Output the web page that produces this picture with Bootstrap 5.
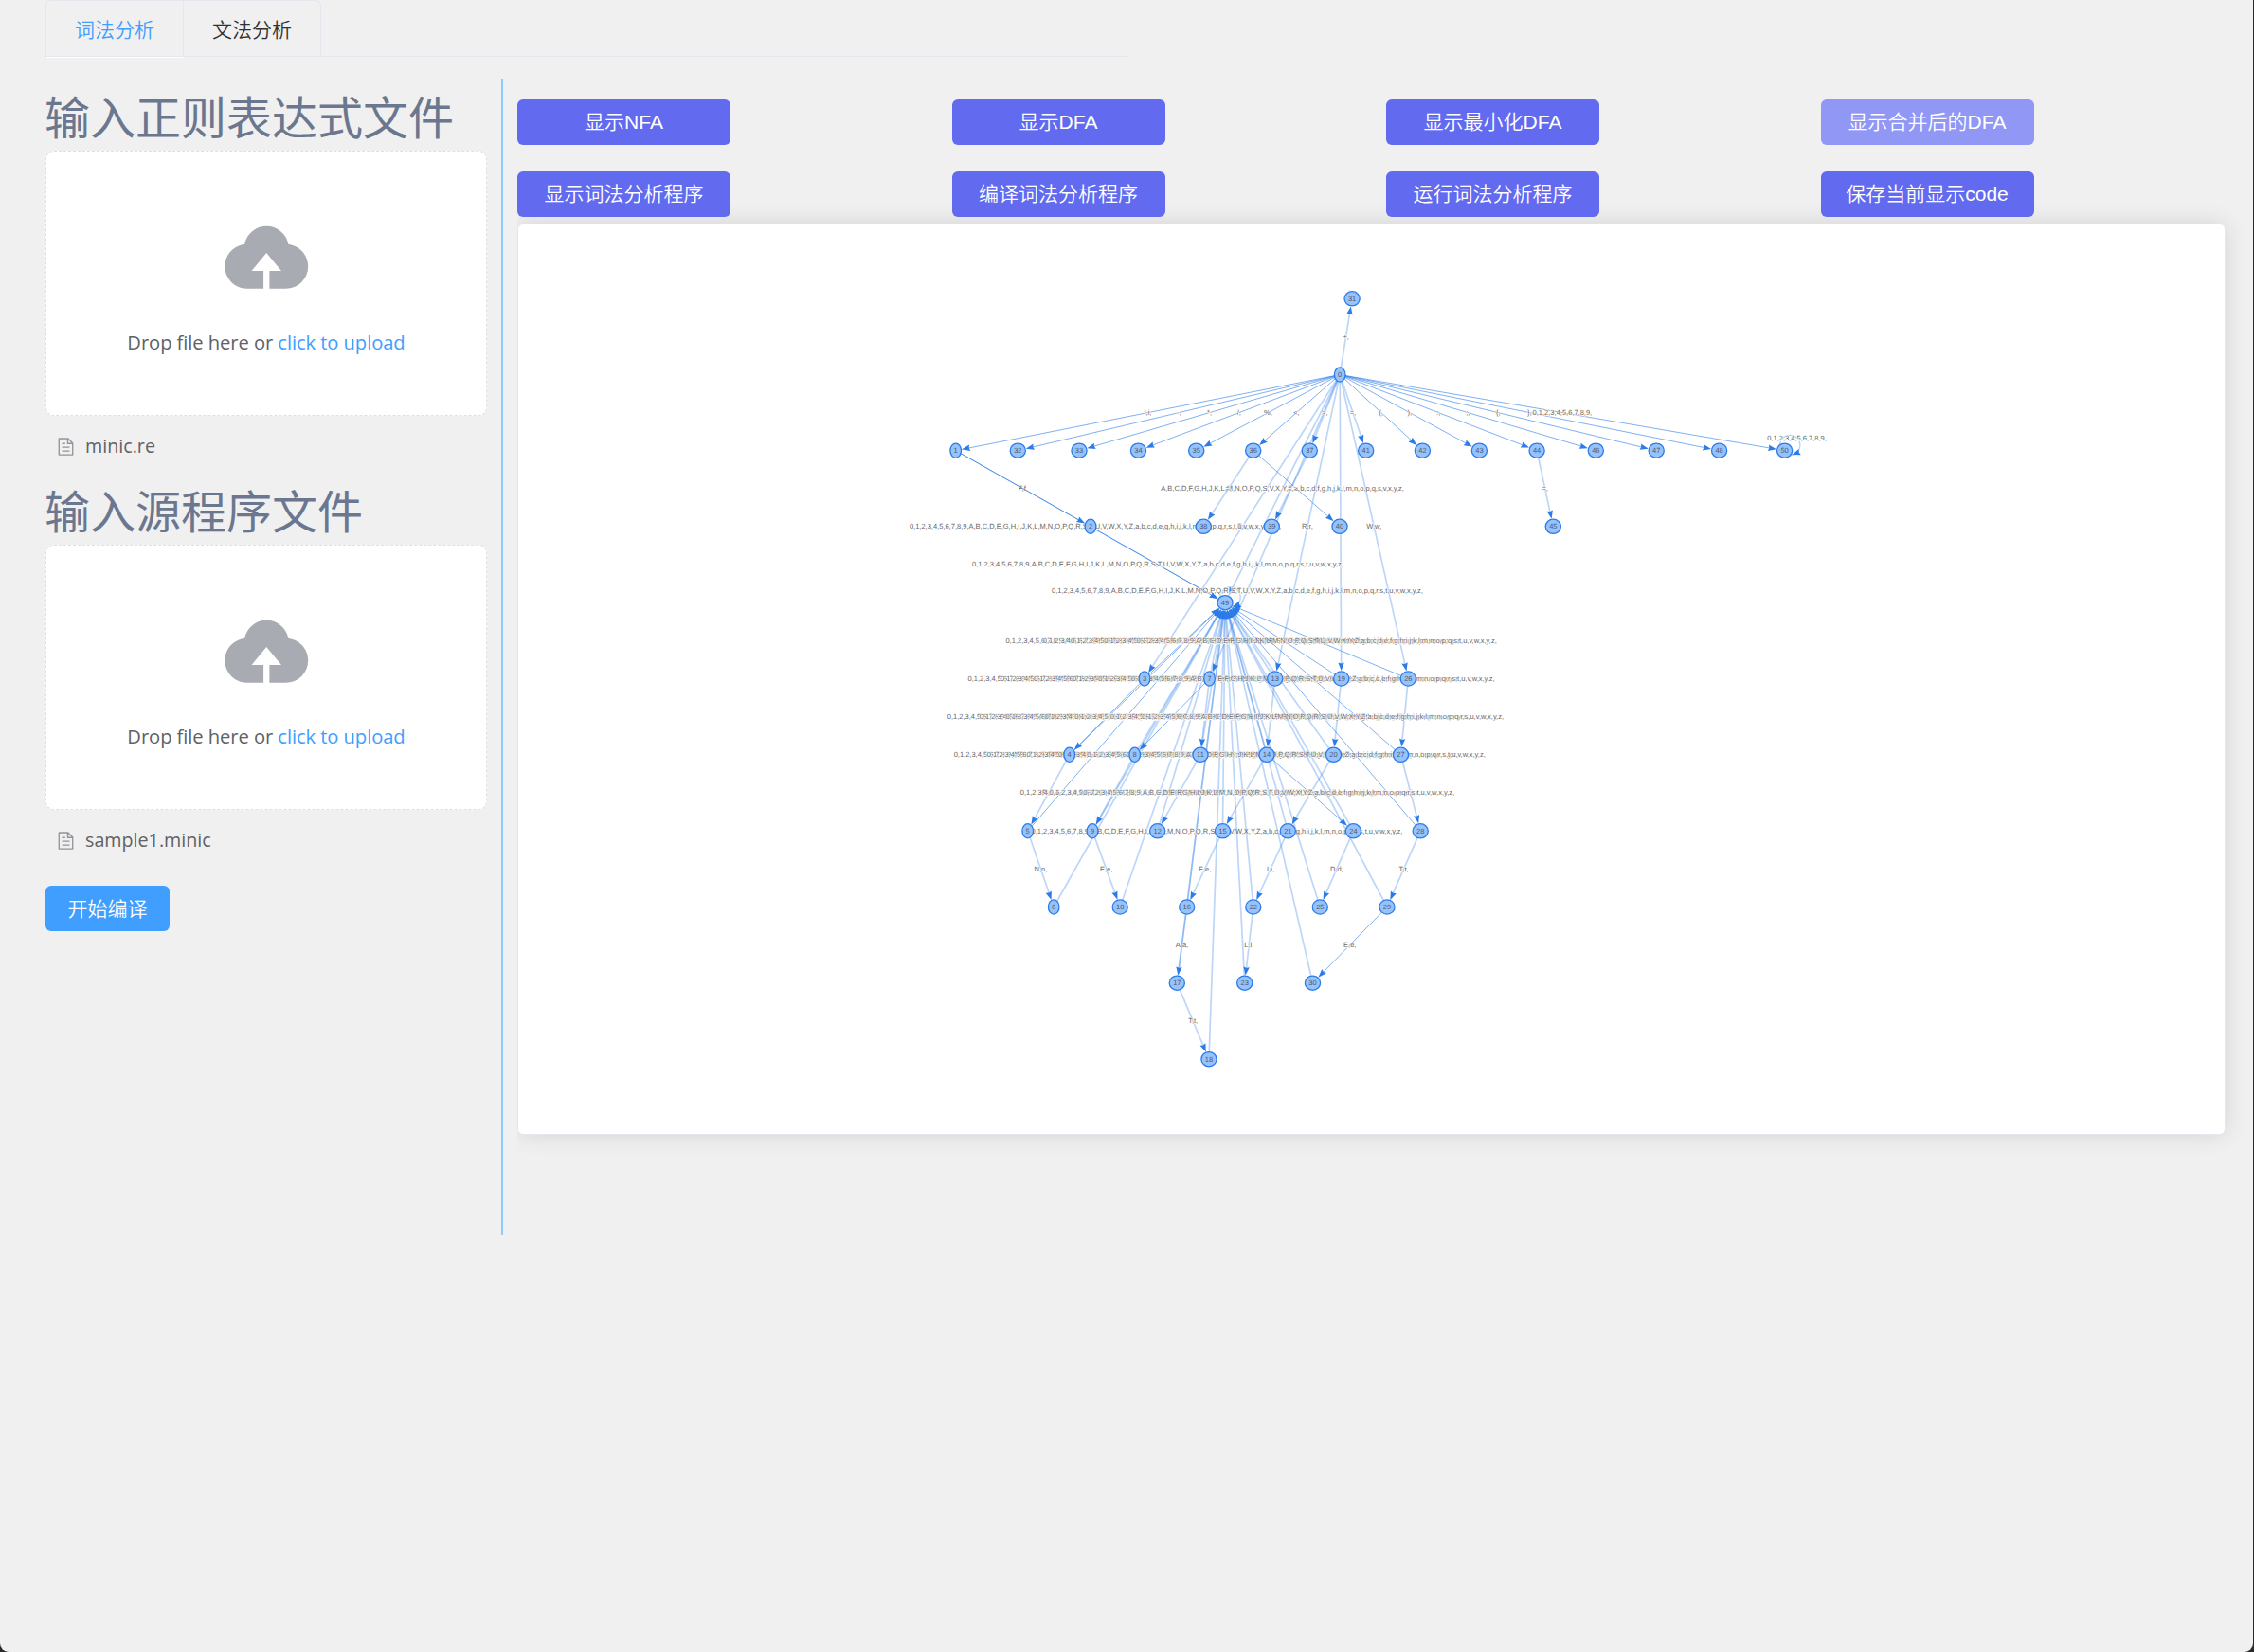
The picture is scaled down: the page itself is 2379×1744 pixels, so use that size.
<!DOCTYPE html>
<html lang="zh-CN">
<head>
<meta charset="utf-8">
<title>词法分析</title>
<link href="https://cdn.jsdelivr.net/npm/bootstrap@5.3.0/dist/css/bootstrap.min.css" rel="stylesheet">
<style>
html { background: #2b2b2b; }
body { background: #2b2b2b; font-family: "Open Sans", "Noto Sans CJK SC", sans-serif; font-size: 21px; color: #303133; }
.app-shell { height: 1744px; width: 2378px; background: #f0f0f0; border-radius: 0 0 9px 9px; overflow: hidden; }
.tab-strip { margin-left: 48px; width: 1141px; height: 60px; border-bottom: 1px solid #e4e7ed; margin-bottom: 23px; }
.tab-set { height: 61px; border: 1px solid #e4e7ed; border-bottom: 0; border-radius: 6px 6px 0 0; }
.tab-set .nav-link { width: 144px; height: 60px; padding: 0; line-height: 59px; text-align: center; color: #303133; font-family: "Noto Sans CJK SC", sans-serif; font-weight: 350; }
.tab-set .nav-link.active { color: #409eff; width: 145px; border-right: 1px solid #e4e7ed; border-bottom: 1px solid #fff; }
.side { width: 529px; padding-left: 48px; padding-right: 15px; }
.side-title { font: 400 48px/76px "Noto Sans CJK SC", sans-serif; color: #6b778f; margin: 0 0 0 -1px; height: 76px; white-space: nowrap; }
.side-title.compact { height: 68px; line-height: 60px; }
.drop-zone { height: 280px; border: 1px dashed #dcdfe6; border-radius: 9px; background: #fff; padding-top: 60px; }
.cloud { width: 100.5px; height: 100.5px; fill: #a8abb2; display: block; }
.drop-text { line-height: 32px; margin-top: 24px; color: #606266; white-space: nowrap; font-size: 20.2px; letter-spacing: -.08px; }
.drop-text span { color: #409eff; }
.file-row { height: 68px; padding: 0 0 4px 11px; gap: 10px; color: #606266; font-size: 19.7px; }
.file-row svg { width: 21px; height: 21px; fill: #909399; }
.btn-run { width: 131px; height: 48px; margin-top: 12px; background: #409eff; color: #fff; border: 0; padding: 0 0 2px; border-radius: 6px; font: 350 21px/46px "Noto Sans CJK SC", sans-serif; }
.splitter { width: 2px; height: 1221px; background: #8ccbff; }
.board { padding-left: 15px; padding-top: 22px; margin-right: -2px; }
.tool-row { height: 48px; margin-bottom: 28px; position: relative; z-index: 1; }
.btn-tool { width: 225px; height: 48px; background: #626aef; color: #fff; border: 0; padding: 0 0 4px; border-radius: 6px; font: 21px/44px "Liberation Sans", "Noto Sans CJK SC", sans-serif; }
.btn-tool.dim { background: #9197f5; }
.tool-row b { font-weight: 350; font-family: "Noto Sans CJK SC", sans-serif; }
.graph-card { width: 1803px; height: 962px; margin-top: 7px; background: #fff; border: 1px solid #e4e7ed; border-radius: 6px; box-shadow: 0 0 24px rgba(0,0,0,.12); clip-path: inset(-40px -40px -40px 0); }
.graph-card svg { display: block; }
.graph-card text { font: 7.5px "Liberation Sans", sans-serif; text-anchor: middle; text-rendering: geometricPrecision; }
.edge-text { fill: #666; stroke: #fff; stroke-width: 1.1px; paint-order: stroke; }
.node-text { fill: #4a5a70; }
.node-shape { fill: #97c2fc; stroke: #2b7ce9; stroke-width: 1.3; }
.edge-line { stroke: #2b7ce9; fill: none; }
.edge-tip { fill: #2b7ce9; }
</style>
</head>
<body>
<div class="app-shell">
  <div class="tab-strip d-flex">
    <nav class="tab-set nav flex-nowrap">
      <a class="nav-link active">词法分析</a>
      <a class="nav-link">文法分析</a>
    </nav>
  </div>
  <div class="d-flex">
    <aside class="side flex-shrink-0">
      <h1 class="side-title">输入正则表达式文件</h1>
      <div class="drop-zone d-flex flex-column align-items-center">
        <svg class="cloud" viewBox="0 0 1024 1024"><path d="M544 864V672h128L512 480 352 672h128v192H320v-1.600c-5.376.320-10.496 1.600-16 1.600A240 240 0 0 1 64 624c0-123.136 93.120-223.488 212.608-237.248A239.808 239.808 0 0 1 512 192a239.872 239.872 0 0 1 235.456 194.752c119.488 13.760 212.480 114.112 212.480 237.248a240 240 0 0 1-240 240c-5.376 0-10.560-1.280-16-1.600v1.600H544z"/></svg>
        <div class="drop-text">Drop file here or <span>click to upload</span></div>
      </div>
      <div class="file-row d-flex align-items-center">
        <svg viewBox="0 0 1024 1024"><path d="M832 384H576V128H192v768h640V384zm-26.496-64L640 154.496V320h165.504zM160 64h480l256 256v608a32 32 0 0 1-32 32H160a32 32 0 0 1-32-32V96a32 32 0 0 1 32-32zm160 448h384v64H320v-64zm0-192h160v64H320v-64zm0 384h384v64H320v-64z"/></svg>
        <span>minic.re</span>
      </div>
      <h1 class="side-title compact">输入源程序文件</h1>
      <div class="drop-zone d-flex flex-column align-items-center">
        <svg class="cloud" viewBox="0 0 1024 1024"><path d="M544 864V672h128L512 480 352 672h128v192H320v-1.600c-5.376.320-10.496 1.600-16 1.600A240 240 0 0 1 64 624c0-123.136 93.120-223.488 212.608-237.248A239.808 239.808 0 0 1 512 192a239.872 239.872 0 0 1 235.456 194.752c119.488 13.760 212.480 114.112 212.480 237.248a240 240 0 0 1-240 240c-5.376 0-10.560-1.280-16-1.600v1.600H544z"/></svg>
        <div class="drop-text">Drop file here or <span>click to upload</span></div>
      </div>
      <div class="file-row d-flex align-items-center">
        <svg viewBox="0 0 1024 1024"><path d="M832 384H576V128H192v768h640V384zm-26.496-64L640 154.496V320h165.504zM160 64h480l256 256v608a32 32 0 0 1-32 32H160a32 32 0 0 1-32-32V96a32 32 0 0 1 32-32zm160 448h384v64H320v-64zm0-192h160v64H320v-64zm0 384h384v64H320v-64z"/></svg>
        <span>sample1.minic</span>
      </div>
      <button class="btn btn-run d-block">开始编译</button>
    </aside>
    <div class="splitter flex-shrink-0"></div>
    <main class="board flex-grow-1">
      <div class="tool-row row g-0">
        <div class="col-3"><button class="btn btn-tool"><b>显示</b>NFA</button></div>
        <div class="col-3"><button class="btn btn-tool"><b>显示</b>DFA</button></div>
        <div class="col-3"><button class="btn btn-tool"><b>显示最小化</b>DFA</button></div>
        <div class="col-3"><button class="btn btn-tool dim"><b>显示合并后的</b>DFA</button></div>
      </div>
      <div class="tool-row row g-0 mb-0">
        <div class="col-3"><button class="btn btn-tool"><b>显示词法分析程序</b></button></div>
        <div class="col-3"><button class="btn btn-tool"><b>编译词法分析程序</b></button></div>
        <div class="col-3"><button class="btn btn-tool"><b>运行词法分析程序</b></button></div>
        <div class="col-3"><button class="btn btn-tool"><b>保存当前显示</b>code</button></div>
      </div>
      <div class="graph-card">
        <svg id="dfa" width="1801" height="960" viewBox="547 237 1801 960"></svg>
      </div>
    </main>
  </div>
</div>
<script src="https://cdn.jsdelivr.net/npm/bootstrap@5.3.0/dist/js/bootstrap.bundle.min.js"></script>
<script>
// Levels of the automaton: y, then state number -> x
const levels = [
  [315.3, {31:1427.1}],
  [395.5, {0:1414.2}],
  [475.7, {1:1008.7,32:1074.3,33:1139,34:1201.5,35:1262.7,36:1322.7,37:1382.3,41:1441.7,42:1501.4,43:1561.4,44:1622.1,46:1684.3,47:1748.2,48:1814.6,50:1883.6}],
  [555.8, {2:1151,38:1270.3,39:1342.3,40:1414,45:1639.3}],
  [636.2, {49:1293}],
  [716.5, {3:1208,7:1276.5,13:1345.7,19:1415.7,26:1486.3}],
  [796.8, {4:1128.7,8:1197.7,11:1267,14:1337,20:1407.5,27:1478.5}],
  [877.3, {5:1084.7,9:1153,12:1221.7,15:1290.5,21:1359.3,24:1428.4,28:1499.2}],
  [957.5, {6:1112.2,10:1182.2,16:1252.7,22:1322.8,25:1393.3,29:1464}],
  [1037.7, {17:1242.3,23:1313.7,30:1385.5}],
  [1118.2, {18:1276}]
];
const P = {};
levels.forEach(([y, m]) => Object.keys(m).forEach(k => P[k] = [m[k], y]));
const DIG = '0,1,2,3,4,5,6,7,8,9,', UP = 'ABCDEFGHIJKLMNOPQRSTUVWXYZ';
const pair = c => c + ',' + c.toLowerCase() + ',';
const rest = (skip, digits = true) => {
  const u = [...UP].filter(c => !skip.includes(c)).join(',') + ',';
  return (digits ? DIG : '') + u + u.toLowerCase();
};
const E = [];
[[1,'I'],[3,'T'],[7,'E'],[13,'R'],[19,'U'],[26,'W']].forEach(([t,c]) => E.push([0,t,pair(c)]));
[[31,'+'],[32,'-'],[33,'*'],[34,'/'],[35,'%'],[36,'<'],[37,'>'],[41,'='],[42,'('],[43,')'],[44,':'],[46,';'],[47,'{'],[48,'}']].forEach(([t,c]) => E.push([0,t,c+',']));
E.push([0,49,rest('EIRTUW',false)],[0,50,DIG],[36,38,'=,'],[36,40,'>,'],[37,39,'=,'],[44,45,'=,']);
[[1,2,'F'],[3,4,'H'],[4,5,'E'],[5,6,'N'],[7,8,'L'],[8,9,'S'],[9,10,'E'],[7,11,'N'],[11,12,'D'],[13,14,'E'],[14,15,'P'],[15,16,'E'],[16,17,'A'],[17,18,'T'],[19,20,'N'],[20,21,'T'],[21,22,'I'],[22,23,'L'],[14,24,'A'],[24,25,'D'],[26,27,'R'],[27,28,'I'],[28,29,'T'],[29,30,'E']].forEach(([a,b,c]) => E.push([a,b,pair(c)]));
const skips = {};
E.forEach(([a,,c]) => { if (/^[A-Z],[a-z],$/.test(c) && a) skips[a] = (skips[a] || '') + c[0]; });
for (let i = 1; i <= 30; i++) E.push([i,49,rest(skips[i] || '')]);

const esc = s => s.replace(/</g,'&lt;').replace(/>/g,'&gt;');
const rx = k => (+k < 10 ? 5.8 : 8.1), ry = 7.6;
const tip = (x, y, a) => {
  const p = (d, w) => (x - d*Math.cos(a) - w*Math.sin(a)).toFixed(1) + ',' + (y - d*Math.sin(a) + w*Math.cos(a)).toFixed(1);
  return `<polygon class="edge-tip" points="${p(0,0)} ${p(8.8,3.2)} ${p(7.8,0)} ${p(8.8,-3.2)}"/>`;
};
let out = '';
E.forEach(([f, t, label]) => {
  const [x1, y1] = P[f], [x2, y2] = P[t], a = Math.atan2(y2-y1, x2-x1);
  const r = 1 / Math.hypot(Math.cos(a)/rx(t), Math.sin(a)/ry) + .6;
  const ex = x2 - r*Math.cos(a), ey = y2 - r*Math.sin(a);
  const steep = Math.abs(y2-y1) > Math.abs(x2-x1)*1.2;
  out += `<line class="edge-line" x1="${x1}" y1="${y1}" x2="${(ex-6*Math.cos(a)).toFixed(1)}" y2="${(ey-6*Math.sin(a)).toFixed(1)}" stroke-width="${steep?1.7:1}" stroke-opacity="${steep?.31:.6}"/>` + tip(ex, ey, a);
  out += `<text class="edge-text" x="${(x1+x2)/2}" y="${(y1+y2)/2+2.4}">${esc(label)}</text>`;
});
[[50,DIG],[49,rest('')]].forEach(([k, label]) => {
  const [x, y] = P[k];
  out += `<circle class="edge-line" cx="${x+5.6}" cy="${y-5.6}" r="10.7" stroke-width="1.3" stroke-opacity=".32"/>` + tip(x+7.8, y+4.4, 2.8);
  out += `<text class="edge-text" x="${x+13}" y="${y-10.4}">${label}</text>`;
});
Object.keys(P).forEach(k => {
  const [x, y] = P[k];
  out += `<ellipse class="node-shape" cx="${x}" cy="${y}" rx="${rx(k)}" ry="${ry}"/><text class="node-text" x="${x}" y="${y+2.4}">${k}</text>`;
});
document.getElementById('dfa').innerHTML = out;
</script>
</body>
</html>
